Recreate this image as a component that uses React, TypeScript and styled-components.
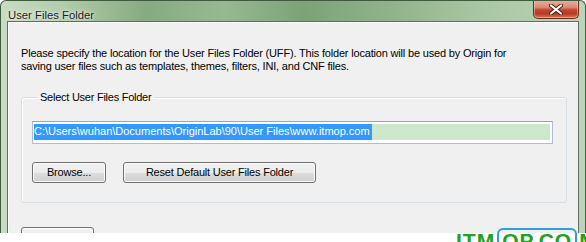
import * as React from "react";
import { createGlobalStyle, styled } from "styled-components";

const GlobalStyle = createGlobalStyle`
  html, body {
    margin: 0;
    padding: 0;
    background: #ffffff;
    width: 586px;
    height: 242px;
    overflow: hidden;
  }
  #root {
    position: relative;
    width: 586px;
    height: 242px;
    overflow: hidden;
  }
`;

const Window = styled.div`
  width: 586px;
  height: 233px;
  display: flex;
  flex-direction: column;
  box-sizing: border-box;
  border: 1px solid #3f5a3c;
  border-bottom: none;
  border-radius: 6px 6px 0 0;
  background: linear-gradient(
    90deg,
    #c9dcc4 0%,
    #b3cdad 10%,
    #86ab80 25%,
    #97b992 38%,
    #7ba376 52%,
    #8fb28a 66%,
    #a9c6a3 82%,
    #bcd4b7 100%
  );
  overflow: hidden;
`;

const TitleBar = styled.div`
  height: 28px;
  display: flex;
  align-items: flex-start;
  justify-content: space-between;
  padding-left: 7px;
`;

const Title = styled.div`
  font-family: "Segoe UI", "Liberation Sans", Arial, sans-serif;
  font-size: 11.3px;
  color: #1a1a1a;
  margin-top: 8px;
  text-shadow: 0 0 6px rgba(255, 255, 255, 0.9), 0 0 3px rgba(255, 255, 255, 0.8);
`;

const CloseButton = styled.div`
  width: 46px;
  height: 19px;
  margin-right: 6px;
  margin-top: -1px;
  box-sizing: border-box;
  border: 1px solid #6d2a1f;
  border-top: none;
  border-radius: 0 0 5px 5px;
  background: linear-gradient(
    180deg,
    #e9b2a2 0%,
    #dc8a74 40%,
    #c4482e 55%,
    #b63a22 75%,
    #d4755c 100%
  );
  box-shadow: inset 0 0 0 1px rgba(255, 220, 210, 0.45);
  display: flex;
  align-items: center;
  justify-content: center;
`;

const Client = styled.div`
  flex: 1;
  margin: 0 6px 0 6px;
  box-sizing: border-box;
  background: #f0f0f0;
  border: 1px solid #5d705b;
  border-bottom: none;
  box-shadow: inset 1px 1px 0 #ffffff;
  padding: 25px 12px 0 13px;
  font-family: "Liberation Sans", Tahoma, Arial, sans-serif;
  font-size: 11px;
  color: #000000;
  display: flex;
  flex-direction: column;
`;

const Intro = styled.p`
  margin: 0 0 18px 0;
  line-height: 13px;
  letter-spacing: -0.18px;
  white-space: nowrap;
`;

const Group = styled.fieldset`
  margin: 0;
  padding: 17px 13px 19px 10px;
  border: 1px solid #d5dfe5;
  border-radius: 3px;
  box-shadow: inset 1px 1px 0 #ffffff;
  width: 546px;
  box-sizing: border-box;
`;

const GroupLabel = styled.legend`
  padding: 0 3px;
  margin-left: 5px;
  line-height: 13px;
  letter-spacing: -0.25px;
`;

const PathBox = styled.div`
  height: 23px;
  box-sizing: border-box;
  border: 1px solid #abc1d3;
  border-top-color: #8aa8c4;
  background: #ffffff;
  padding: 2px 2px 3px 1px;
  display: flex;
  align-items: stretch;
`;

const Selected = styled.span`
  background: #3399ff;
  color: #ffffff;
  line-height: 15px;
  padding: 0 1px 0 0;
  white-space: nowrap;
`;

const Caret = styled.span`
  width: 1px;
  background: #cc7a2a;
`;

const Fill = styled.span`
  flex: 1;
  background: #cde8cc;
`;

const ButtonRow = styled.div`
  display: flex;
  gap: 17px;
  margin-top: 18px;
`;

const Button = styled.div<{ $w: number }>`
  width: ${(p) => p.$w}px;
  height: 21px;
  box-sizing: border-box;
  border: 1px solid #707070;
  border-radius: 3px;
  background: linear-gradient(180deg, #f2f2f2 0%, #ebebeb 50%, #dddddd 51%, #cfcfcf 100%);
  box-shadow: inset 0 0 0 1px #fcfcfc;
  display: flex;
  align-items: center;
  justify-content: center;
  line-height: 13px;
  letter-spacing: -0.2px;
`;

const BottomButton = styled(Button)`
  margin-top: 24px;
  align-self: flex-start;
`;

const Watermark = styled.div`
  position: absolute;
  left: 456px;
  top: 230px;
  display: flex;
  align-items: flex-start;
  font-family: "Liberation Sans", Arial, sans-serif;
  font-weight: bold;
  font-size: 21px;
  color: #22a022;
  line-height: 22px;
  letter-spacing: 1px;
`;

const WatermarkBox = styled.span`
  border: 2px solid #2a9fe0;
  border-radius: 6px;
  padding: 0 3px;
  margin: -2px 2px 0 2px;
`;

export default function App() {
  return (
    <>
      <GlobalStyle />
      <Window>
        <TitleBar>
          <Title>User Files Folder</Title>
          <CloseButton>
            <svg width="14" height="11" viewBox="0 0 14 11">
              <path
                d="M2 1.5 L12 9.5 M12 1.5 L2 9.5"
                stroke="#4a1a12"
                strokeWidth="4"
                strokeLinecap="round"
              />
              <path
                d="M2 1.5 L12 9.5 M12 1.5 L2 9.5"
                stroke="#ffffff"
                strokeWidth="2.2"
                strokeLinecap="round"
              />
            </svg>
          </CloseButton>
        </TitleBar>
        <Client>
          <Intro>
            Please specify the location for the User Files Folder (UFF). This folder location will be used by Origin for
            <br />
            saving user files such as templates, themes, filters, INI, and CNF files.
          </Intro>
          <Group>
            <GroupLabel>Select User Files Folder</GroupLabel>
            <PathBox>
              <Selected>C:\Users\wuhan\Documents\OriginLab\90\User Files\www.itmop.com</Selected>
              <Caret />
              <Fill />
            </PathBox>
            <ButtonRow>
              <Button $w={74}>Browse...</Button>
              <Button $w={193}>Reset Default User Files Folder</Button>
            </ButtonRow>
          </Group>
          <BottomButton $w={73} />
        </Client>
      </Window>
      <Watermark>
        ITM<WatermarkBox>OP.CO</WatermarkBox>M
      </Watermark>
    </>
  );
}
